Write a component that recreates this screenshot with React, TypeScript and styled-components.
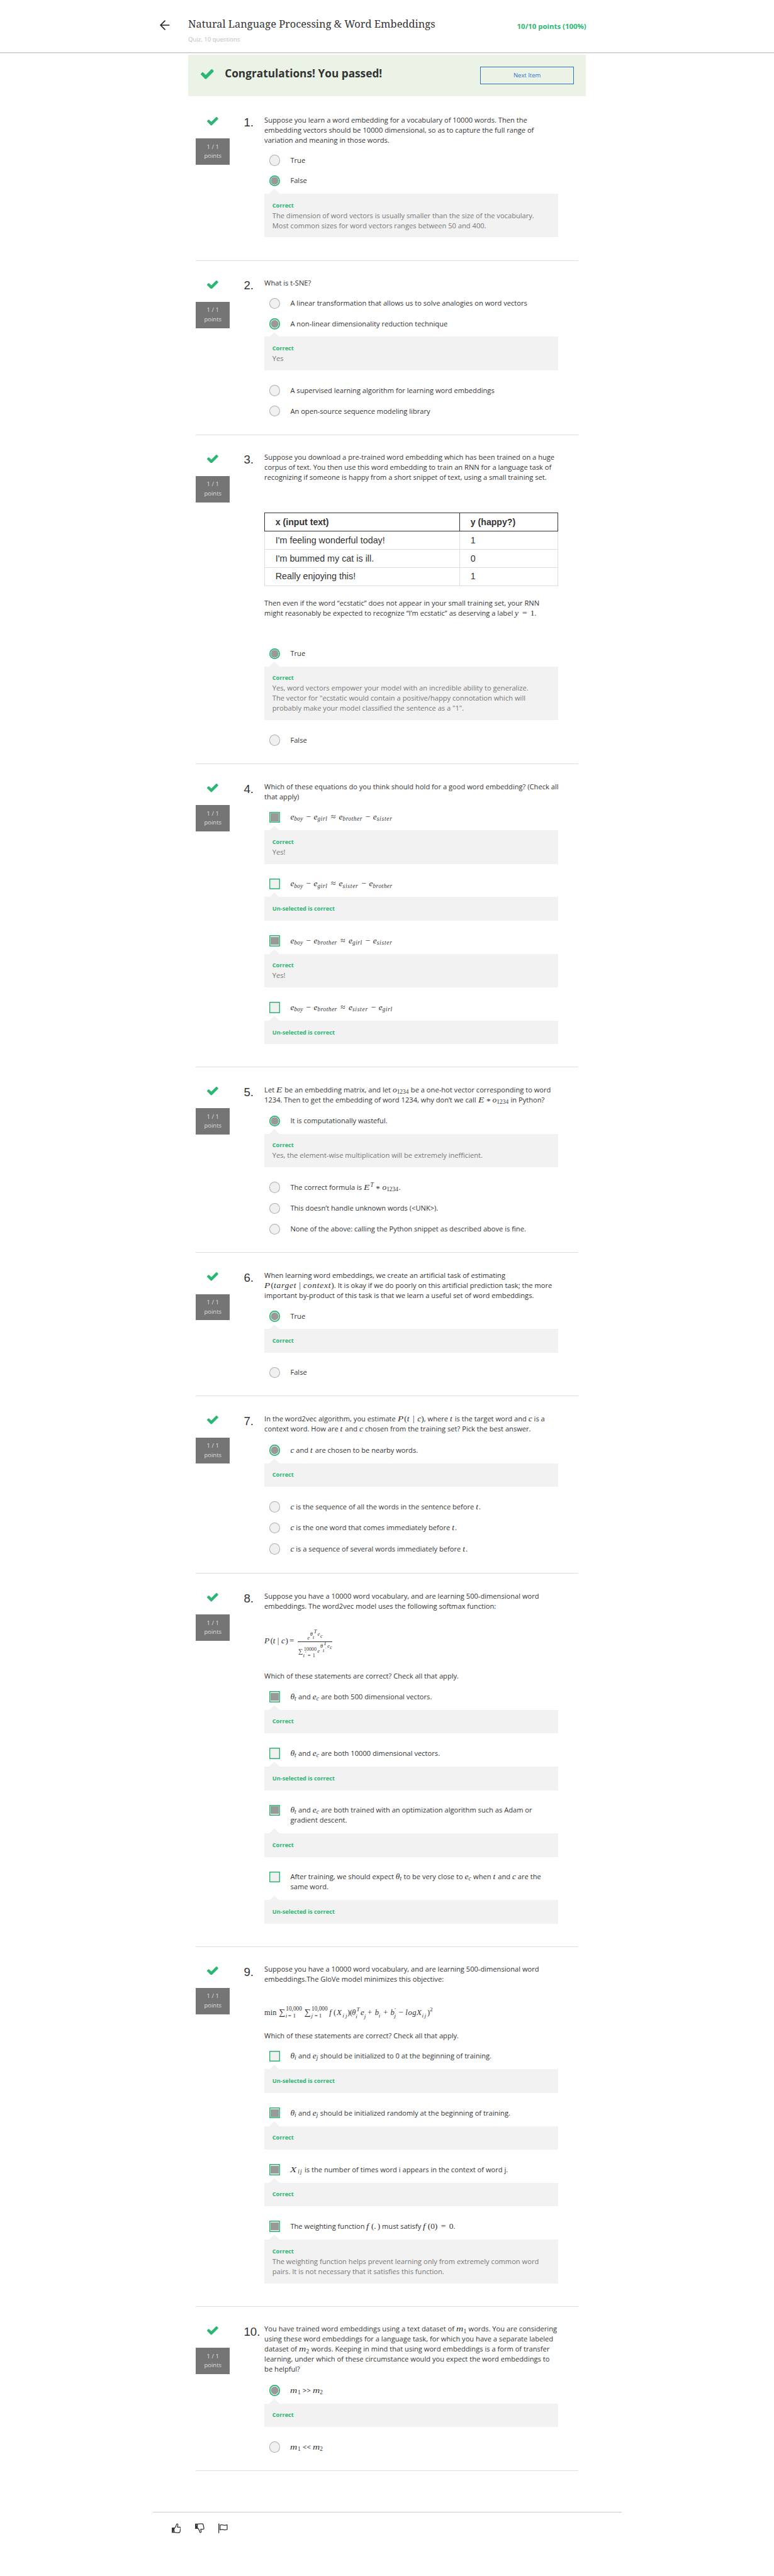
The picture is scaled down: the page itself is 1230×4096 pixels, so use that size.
import React from "react";
import styled, { createGlobalStyle, css } from "styled-components";

/* Design units: the page was laid out on an 1845px wide canvas. */
const u = (n: number) => `${Math.round((n * 2000) / 3) / 1000}px`;

const c = {
  green: "#2ab673",
  text: "#333",
  muted: "#777",
  panel: "#f2f2f2",
  line: "#ddd",
};

const sans = `"Open Sans", "Noto Sans", sans-serif`;
const arial = `"Liberation Sans", Arial, sans-serif`;
const times = `"Liberation Serif", "Times New Roman", serif`;

const GlobalStyle = createGlobalStyle`
  html, body { margin: 0; padding: 0; background: #fff; }
  *, *::before, *::after { box-sizing: border-box; }
`;

const Page = styled.div`
  width: 1230px;
  height: 4096px;
  overflow: hidden;
  background: #fff;
  color: ${c.text};
  font: 400 ${u(16.71)} / ${u(24)} ${sans};
`;

/* ---------- header ---------- */

const Header = styled.header`
  display: flex;
  height: ${u(126.5)};
  padding: ${u(40)} 0 0 ${u(381.5)};
  border-bottom: 1px solid #c9c9c9;
  box-shadow: 0 1px 1px rgba(0, 0, 0, 0.1);
`;

const BackArrow = styled.svg`
  width: ${u(24)};
  height: ${u(24)};
  margin-top: ${u(7.6)};
`;

const TitleBlock = styled.div`
  width: ${u(649)};
  margin-left: ${u(43)};
`;

const Title = styled.h1`
  margin: 0;
  font: 400 ${u(24.6)} / ${u(32)} "Noto Serif", "DejaVu Serif", serif;
  white-space: nowrap;
`;

const Subtitle = styled.div`
  margin-top: ${u(12)};
  font-size: ${u(14.4)};
  line-height: ${u(22)};
  color: #bdbdbd;
`;

const Score = styled.div`
  width: ${u(300)};
  padding-top: ${u(11)};
  font-size: ${u(17.1)};
  font-weight: 700;
  text-align: right;
  color: ${c.green};
`;

/* ---------- banner ---------- */

const Banner = styled.section`
  display: flex;
  align-items: flex-start;
  width: ${u(948.5)};
  height: ${u(99.5)};
  margin: ${u(4)} 0 0 ${u(448.5)};
  padding: ${u(28)} ${u(28.8)} 0 ${u(30.5)};
  background: #eaf3e6;
`;

const BannerCheck = styled.div`
  padding-top: ${u(6.5)};
`;

const BannerTitle = styled.h2`
  flex: 1;
  margin: ${u(0.4)} 0 0 ${u(25.8)};
  font: 700 ${u(25.9)} / ${u(34)} ${sans};
  white-space: nowrap;
`;

const NextButton = styled.button`
  width: ${u(223.5)};
  height: ${u(42.8)};
  padding: 0;
  border: 1px solid #2a73cc;
  background: transparent;
  color: #2a73cc;
  font: 400 ${u(14.2)} / ${u(20)} ${sans};
`;

const CheckSvg = styled.svg<{ $w: number }>`
  display: block;
  width: ${(p) => u(p.$w)};
  height: ${(p) => u(p.$w * 0.7665)};
  fill: ${c.green};
`;

/* ---------- question frame ---------- */

const Questions = styled.main`
  width: ${u(912.3)};
  margin-left: ${u(466.7)};
  padding-top: ${u(2.5)};
`;

const QuestionBox = styled.section<{ $h: number }>`
  display: flex;
  height: ${(p) => u(p.$h)};
  border-bottom: 1px solid ${c.line};
`;

const Status = styled.div`
  display: flex;
  flex-direction: column;
  align-items: center;
  width: ${u(81.4)};
  padding-top: ${u(46.6)};
`;

const Points = styled.div`
  width: 100%;
  height: ${u(62.6)};
  margin-top: ${u(31)};
  padding-top: ${u(9.5)};
  background: #757575;
  color: #dedede;
  font-size: ${u(14.25)};
  line-height: ${u(22)};
  text-align: center;
`;

const Num = styled.div`
  width: ${u(49)};
  margin-left: ${u(33.1)};
  padding-top: ${u(43.2)};
  font: 400 ${u(28)} / ${u(32)} ${arial};
  white-space: nowrap;
`;

const Body = styled.div`
  width: ${u(700.5)};
  padding-top: ${u(41.4)};
`;

const Prompt = styled.div`
  white-space: nowrap;
`;

const Options = styled.div<{ $gap?: number }>`
  margin-top: ${(p) => u(p.$gap ?? 11.6)};
`;

const OptionRow = styled.div<{ $tall?: boolean }>`
  display: flex;
  align-items: flex-start;
  padding: ${u(12.5)} 0 ${(p) => u(p.$tall ? 13.7 : 12.8)} ${u(11.6)};
  white-space: nowrap;
`;

const control = css`
  flex: none;
  width: ${u(26.4)};
  height: ${u(26.4)};
  margin: ${u(-1)} ${u(24)} ${u(-2)} 0;
`;

const Radio = styled.span<{ $on?: boolean }>`
  ${control}
  border-radius: 50%;
  background: #f0f0f0;
  box-shadow: inset 0 0 0 1px #b0b0b0;
  ${(p) =>
    p.$on &&
    css`
      background: radial-gradient(circle closest-side, #999 0 68%, #f0f0f0 74%);
      box-shadow: inset 0 0 0 1.7px ${c.green};
    `}
`;

const Checkbox = styled.span<{ $on?: boolean }>`
  ${control}
  padding: ${u(4)};
  border-radius: 1px;
  background: #f0f0f0;
  box-shadow: inset 0 0 0 1.4px ${c.green};
  &::before {
    content: "";
    display: ${(p) => (p.$on ? "block" : "none")};
    width: 100%;
    height: 100%;
    background: #999;
  }
`;

const Feedback = styled.div`
  position: relative;
  margin: ${u(5.8)} 0 ${u(23)};
  padding: ${u(16)} ${u(19)} ${u(16.4)};
  background: ${c.panel};
  color: ${c.muted};
  white-space: nowrap;
  &::before {
    content: "";
    position: absolute;
    left: ${u(12.3)};
    top: ${u(-11.5)};
    border: solid transparent;
    border-width: 0 8px 8px;
    border-bottom-color: ${c.panel};
  }
`;

const Verdict = styled.div`
  font-size: ${u(13.8)};
  font-weight: 700;
  color: ${c.green};
`;

/* ---------- table ---------- */

const Table = styled.table`
  width: 100%;
  margin: ${u(72)} 0 ${u(29.2)};
  border-collapse: collapse;
  font: 400 ${u(21.5)} / ${u(28)} ${arial};
  td,
  th {
    height: ${u(43.3)};
    padding: 0 ${u(25)};
    border: 1px solid #ddd;
    text-align: left;
  }
  th {
    border-color: #333;
    font-size: ${u(21.2)};
    font-weight: 700;
  }
  th:first-child {
    width: ${u(465)};
  }
`;

/* ---------- maths ---------- */

const M = styled.span`
  font-family: ${times};
  font-size: 1.21em;
  line-height: 0;
  white-space: nowrap;
`;

const I = styled.i<{ $ls?: number }>`
  letter-spacing: ${(p) => p.$ls ?? 0}em;
`;

/* A letter stretched to the proportions of the maths italic. */
const Wide = styled.i<{ $w: number; $x: number }>`
  display: inline-block;
  width: ${(p) => p.$w}em;
  transform: scaleX(${(p) => p.$x});
  transform-origin: left;
`;

const Sub = styled.sub<{ $ls?: number }>`
  font-size: 0.7em;
  font-style: italic;
  line-height: 0;
  vertical-align: -0.22em;
  letter-spacing: ${(p) => p.$ls ?? 0}em;
  margin-right: 0.05em;
`;

const Sup = styled.sup`
  font-size: 0.7em;
  font-style: italic;
  line-height: 0;
  vertical-align: 0.58em;
`;

const Up = styled.span`
  font-style: normal;
`;

const Op = styled.span<{ $w?: number; $m?: number; $y?: number }>`
  display: inline-block;
  width: ${(p) => p.$w ?? 0.778}em;
  margin: 0 ${(p) => p.$m ?? 0.222}em;
  text-align: center;
  transform: translateY(${(p) => p.$y ?? 0}em);
`;

/* One glyph run of a display formula: its advance, drop from the baseline and size. */
const Glyph = styled.span<{ $w: number; $y: number; $s: number; $up: boolean }>`
  display: inline-block;
  width: ${(p) => u(p.$w)};
  font-size: ${(p) => u(p.$s)};
  font-style: ${(p) => (p.$up ? "normal" : "italic")};
  line-height: 0;
  transform: translateY(${(p) => u(p.$y)});
`;

const Softmax = styled.div`
  display: flex;
  align-items: center;
  height: ${u(143.4)};
  padding-top: ${u(2.6)};
  font: italic 400 ${u(19.5)} / ${u(24)} ${times};
  white-space: nowrap;
`;

const Fraction = styled.span`
  display: flex;
  flex-direction: column;
  font-size: ${u(12.5)};
`;

const Numerator = styled.span`
  height: ${u(40)};
  padding: ${u(10)} 0 0 ${u(23.5)};
`;

const Denominator = styled.span`
  width: ${u(83.5)};
  height: ${u(40)};
  padding: ${u(12)} 0 0 ${u(1.5)};
  border-top: 1px solid ${c.text};
`;

const Objective = styled.div`
  height: ${u(110.7)};
  padding-top: ${u(54.7)};
  font: italic 400 ${u(18.7)} / ${u(24)} ${times};
  white-space: nowrap;
`;

/* ---------- footer ---------- */

const Footer = styled.footer`
  display: flex;
  gap: ${u(34)};
  width: ${u(1116.5)};
  margin: ${u(97)} 0 0 ${u(365)};
  padding: ${u(26)} 0 0 ${u(44)};
  border-top: 1px solid #ccc;
`;

const FooterIcon = styled.svg`
  width: ${u(22)};
  height: ${u(24)};
  fill: none;
  stroke: ${c.text};
  stroke-width: 1.9;
  stroke-linejoin: round;
  stroke-linecap: round;
`;

/* ---------- parts ---------- */

const Check = ({ w = 26.7 }: { w?: number }) => (
  <CheckSvg $w={w} viewBox="121 334 1550 1188">
    <path d="M1671 566q0 40-28 68l-724 724-136 136q-28 28-68 28t-68-28l-136-136-362-362q-28-28-28-68t28-68l136-136q28-28 68-28t68 28l294 295 656-657q28-28 68-28t68 28l136 136q28 28 28 68z" />
  </CheckSvg>
);

const Question = ({ n, h, children }: { n: number; h: number; children: React.ReactNode }) => (
  <QuestionBox $h={h}>
    <Status>
      <Check />
      <Points>
        1 / 1<br />
        points
      </Points>
    </Status>
    <Num>{n}.</Num>
    <Body>{children}</Body>
  </QuestionBox>
);

type OptProps = {
  box?: boolean;
  on?: boolean;
  tall?: boolean;
  verdict?: string;
  note?: React.ReactNode;
  children: React.ReactNode;
};

const Option = ({ box, on, tall, verdict, note, children }: OptProps) => (
  <>
    <OptionRow $tall={tall}>
      {box ? <Checkbox $on={on} /> : <Radio $on={on} />}
      <div>{children}</div>
    </OptionRow>
    {verdict && (
      <Feedback>
        <Verdict>{verdict}</Verdict>
        {note}
      </Feedback>
    )}
  </>
);

const OK = "Correct";
const UN = "Un-selected is correct";

type Who = "boy" | "girl" | "brother" | "sister";
const tracking: Record<Who, number> = { boy: 0.02, girl: 0.06, brother: 0.05, sister: 0.08 };

const Emb = ({ s }: { s: Who }) => (
  <>
    <I>e</I>
    <Sub $ls={tracking[s]}>{s}</Sub>
  </>
);

const Analogy = ({ w }: { w: [Who, Who, Who, Who] }) => (
  <M>
    <Emb s={w[0]} />
    <Op>−</Op>
    <Emb s={w[1]} />
    <Op $m={0.27}>≈</Op>
    <Emb s={w[2]} />
    <Op>−</Op>
    <Emb s={w[3]} />
  </M>
);

const O1234 = () => (
  <>
    <I>o</I>
    <Sub>
      <Up>1234</Up>
    </Sub>
  </>
);
const BigE = () => (
  <Wide $w={0.77} $x={1.15}>
    E
  </Wide>
);
const BigP = () => (
  <Wide $w={0.78} $x={1.12}>
    P
  </Wide>
);
const SmallF = () => (
  <Wide $w={0.56} $x={1.1}>
    f
  </Wide>
);
const Star = ({ m }: { m?: number }) => (
  <Op $w={0.5} $m={m} $y={0.17}>
    *
  </Op>
);
const V = ({ b, s }: { b: string; s: string }) => (
  <M>
    <I>{b}</I>
    <Sub>{s}</Sub>
  </M>
);
const Sym = ({ s }: { s: string }) => (
  <M>
    <I $ls={s === "t" ? 0.08 : 0}>{s}</I>
  </M>
);
const Mn = ({ n }: { n: number }) => (
  <M>
    <Wide $w={0.862} $x={1.16}>
      m
    </Wide>
    <Sub>
      <Up>{n}</Up>
    </Sub>
  </M>
);

type G = [text: string, advance: number, drop: number, size: number, upright?: 1];

const Glyphs = ({ run }: { run: G[] }) => (
  <>
    {run.map(([t, w, y, s, up], i) => (
      <Glyph key={i} $w={w} $y={y} $s={s} $up={!!up}>
        {t}
      </Glyph>
    ))}
  </>
);

const lhs: G[] = [
  ["P", 14.5, -2.1, 20],
  ["(", 6, -2.1, 19.5, 1],
  ["t", 10.5, -2.1, 19.5],
  ["|", 9.5, -2.1, 19.5, 1],
  ["c", 9.5, -2.1, 19.5],
  [")", 10, -2.1, 19.5, 1],
  ["=", 19, -2.1, 19.5, 1],
];
const numerator: G[] = [
  ["e", 6.7, 9.8, 12.5],
  ["θ", 6.3, 2.1, 12.5],
  ["t", 2.5, 9.1, 12.5],
  ["T", 9, -4.2, 12.8],
  ["e", 6.3, 1.1, 12.5],
  ["c", 6, 5.5, 12.5],
];
const denominator: G[] = [
  ["∑", 12, 0, 15.5, 1],
  ["t", 1.4, 9.1, 12.5],
  ["10000", 3.3, -5.9, 12.2, 1],
  ["′", 6, 5, 11],
  ["=", 12, 9, 13, 1],
  ["1", 11.3, 9.1, 12.5, 1],
  ["e", 7, -1.9, 12.5],
  ["θ", 6, -13.5, 12.5],
  ["t", 1.7, -3.2, 12.5],
  ["T", 4, -18.9, 12.8],
  ["′", 5.3, -8, 10],
  ["e", 6, -13.5, 12.5],
  ["c", 6, -10.5, 12.5],
];
const objective: G[] = [
  ["min", 34.7, 0, 18.7, 1],
  ["∑", 15.9, 0, 21, 1],
  ["i", 0.6, 6, 13.8],
  ["10,000", 5.3, -10.3, 14, 1],
  ["=", 11.5, 6, 13.8, 1],
  ["1", 27.7, 6, 13.8, 1],
  ["∑", 16, 0, 21, 1],
  ["j", 0.8, 6, 13.8],
  ["10,000", 7, -10.3, 14, 1],
  ["=", 10.5, 6, 13.8, 1],
  ["1", 25, 6, 13.8, 1],
  ["f", 10, 0, 19.5],
  ["(", 7.5, 0, 18.7, 1],
  ["X", 14, 0, 19.5],
  ["i", 7, 6, 13.8],
  ["j", 4.5, 6, 13.8],
  [")", 6, 0, 18.7, 1],
  ["(", 5, 0, 18.7, 1],
  ["θ", 9, 0, 18.7],
  ["i", 1.6, 7, 13.8],
  ["T", 9.9, -9, 13.8],
  ["e", 8.5, 0, 19.5],
  ["j", 8, 7, 13.8],
  ["+", 17.5, 0, 19.5, 1],
  ["b", 9, 0, 19],
  ["i", 11, 6, 13.8],
  ["+", 17.5, 0, 19.5, 1],
  ["b", 9, 0, 19],
  ["′", 0, -7, 13.8],
  ["j", 10, 6, 13.8],
  ["−", 16.5, 0, 19.5, 1],
  ["l", 6.5, 0, 19],
  ["o", 10, 0, 19],
  ["g", 10, 0, 19],
  ["X", 13, 0, 19.5],
  ["i", 6, 6, 13.8],
  ["j", 6.6, 6, 13.8],
  [")", 6.1, 0, 18.7, 1],
  ["2", 8, -9.5, 13.8, 1],
];

export default function App() {
  return (
    <Page>
      <GlobalStyle />
      <Header>
        <BackArrow viewBox="0 0 24 24" fill="none" stroke="#222" strokeWidth="2.5" strokeLinecap="round">
          <path d="M22.2 12H1.6M12 1.6 1.6 12 12 22.4" />
        </BackArrow>
        <TitleBlock>
          <Title>Natural Language Processing &amp; Word Embeddings</Title>
          <Subtitle>Quiz, 10 questions</Subtitle>
        </TitleBlock>
        <Score>10/10 points (100%)</Score>
      </Header>

      <Banner>
        <BannerCheck>
          <Check w={31} />
        </BannerCheck>
        <BannerTitle>Congratulations! You passed!</BannerTitle>
        <NextButton>Next Item</NextButton>
      </Banner>

      <Questions>
        <Question n={1} h={389.4}>
          <Prompt>
            Suppose you learn a word embedding for a vocabulary of 10000 words. Then the
            <br />
            embedding vectors should be 10000 dimensional, so as to capture the full range of
            <br />
            variation and meaning in those words.
          </Prompt>
          <Options>
            <Option>True</Option>
            <Option
              on
              verdict={OK}
              note={
                <>
                  The dimension of word vectors is usually smaller than the size of the vocabulary.
                  <br />
                  Most common sizes for word vectors ranges between 50 and 400.
                </>
              }
            >
              False
            </Option>
          </Options>
        </Question>

        <Question n={2} h={415.6}>
          <Prompt>What is t-SNE?</Prompt>
          <Options>
            <Option>A linear transformation that allows us to solve analogies on word vectors</Option>
            <Option on verdict={OK} note="Yes">
              A non-linear dimensionality reduction technique
            </Option>
            <Option>A supervised learning algorithm for learning word embeddings</Option>
            <Option>An open-source sequence modeling library</Option>
          </Options>
        </Question>

        <Question n={3} h={785.2}>
          <Prompt>
            Suppose you download a pre-trained word embedding which has been trained on a huge
            <br />
            corpus of text. You then use this word embedding to train an RNN for a language task of
            <br />
            recognizing if someone is happy from a short snippet of text, using a small training set.
          </Prompt>
          <Table>
            <thead>
              <tr>
                <th>x (input text)</th>
                <th>y (happy?)</th>
              </tr>
            </thead>
            <tbody>
              <tr>
                <td>I'm feeling wonderful today!</td>
                <td>1</td>
              </tr>
              <tr>
                <td>I'm bummed my cat is ill.</td>
                <td>0</td>
              </tr>
              <tr>
                <td>Really enjoying this!</td>
                <td>1</td>
              </tr>
            </tbody>
          </Table>
          <Prompt>
            Then even if the word “ecstatic” does not appear in your small training set, your RNN
            <br />
            might reasonably be expected to recognize “I’m ecstatic” as deserving a label{" "}
            <M>
              <I $ls={0.05}>y</I>
              <Op $m={0.278}>=</Op>1
            </M>
            .
          </Prompt>
          <Options $gap={59.8}>
            <Option
              on
              verdict={OK}
              note={
                <>
                  Yes, word vectors empower your model with an incredible ability to generalize.
                  <br />
                  The vector for "ecstatic would contain a positive/happy connotation which will
                  <br />
                  probably make your model classified the sentence as a "1".
                </>
              }
            >
              True
            </Option>
            <Option>False</Option>
          </Options>
        </Question>

        <Question n={4} h={723}>
          <Prompt>
            Which of these equations do you think should hold for a good word embedding? (Check all
            <br />
            that apply)
          </Prompt>
          <Options $gap={12.4}>
            <Option box on tall verdict={OK} note="Yes!">
              <Analogy w={["boy", "girl", "brother", "sister"]} />
            </Option>
            <Option box tall verdict={UN}>
              <Analogy w={["boy", "girl", "sister", "brother"]} />
            </Option>
            <Option box on tall verdict={OK} note="Yes!">
              <Analogy w={["boy", "brother", "girl", "sister"]} />
            </Option>
            <Option box tall verdict={UN}>
              <Analogy w={["boy", "brother", "sister", "girl"]} />
            </Option>
          </Options>
        </Question>

        <Question n={5} h={443}>
          <Prompt>
            Let{" "}
            <M>
              <BigE />
            </M>{" "}
            be an embedding matrix, and let{" "}
            <M>
              <O1234 />
            </M>{" "}
            be a one-hot vector corresponding to word
            <br />
            1234. Then to get the embedding of word 1234, why don’t we call{" "}
            <M>
              <BigE />
              <Star />
              <O1234 />
            </M>{" "}
            in Python?
          </Prompt>
          <Options $gap={14}>
            <Option on verdict={OK} note="Yes, the element-wise multiplication will be extremely inefficient.">
              It is computationally wasteful.
            </Option>
            <Option tall>
              The correct formula is{" "}
              <M>
                <BigE />
                <Sup>T</Sup>
                <Star m={0.26} />
                <O1234 />
              </M>
              .
            </Option>
            <Option>This doesn’t handle unknown words (&lt;UNK&gt;).</Option>
            <Option>None of the above: calling the Python snippet as described above is fine.</Option>
          </Options>
        </Question>

        <Question n={6} h={342}>
          <Prompt>
            When learning word embeddings, we create an artificial task of estimating
            <br />
            <M>
              <BigP />(<I $ls={0.055}>target</I>
              <Op $w={0.278} $m={0.26}>|</Op>
              <I $ls={0.058}>context</I>)
            </M>
            . It is okay if we do poorly on this artificial prediction task; the more
            <br />
            important by-product of this task is that we learn a useful set of word embeddings.
          </Prompt>
          <Options $gap={12.8}>
            <Option on verdict={OK}>
              True
            </Option>
            <Option>False</Option>
          </Options>
        </Question>

        <Question n={7} h={422.3}>
          <Prompt>
            In the word2vec algorithm, you estimate{" "}
            <M>
              <BigP />
              (<I $ls={0.08}>t</I>
              <Op $w={0.278} $m={0.3}>|</Op>
              <I>c</I>)
            </M>
            , where <Sym s="t" /> is the target word and <Sym s="c" /> is a
            <br />
            context word. How are <Sym s="t" /> and <Sym s="c" /> chosen from the training set? Pick the best answer.
          </Prompt>
          <Options $gap={13.9}>
            <Option on tall verdict={OK}>
              <Sym s="c" /> and <Sym s="t" /> are chosen to be nearby words.
            </Option>
            <Option tall>
              <Sym s="c" /> is the sequence of all the words in the sentence before <Sym s="t" />.
            </Option>
            <Option tall>
              <Sym s="c" /> is the one word that comes immediately before <Sym s="t" />.
            </Option>
            <Option tall>
              <Sym s="c" /> is a sequence of several words immediately before <Sym s="t" />.
            </Option>
          </Options>
        </Question>

        <Question n={8} h={890.7}>
          <Prompt>
            Suppose you have a 10000 word vocabulary, and are learning 500-dimensional word
            <br />
            embeddings. The word2vec model uses the following softmax function:
          </Prompt>
          <Softmax>
            <span>
              <Glyphs run={lhs} />
            </span>
            <Fraction>
              <Numerator>
                <Glyphs run={numerator} />
              </Numerator>
              <Denominator>
                <Glyphs run={denominator} />
              </Denominator>
            </Fraction>
          </Softmax>
          <Prompt>Which of these statements are correct? Check all that apply.</Prompt>
          <Options $gap={12.4}>
            <Option box on tall verdict={OK}>
              <V b="θ" s="t" /> and <V b="e" s="c" /> are both 500 dimensional vectors.
            </Option>
            <Option box tall verdict={UN}>
              <V b="θ" s="t" /> and <V b="e" s="c" /> are both 10000 dimensional vectors.
            </Option>
            <Option box on tall verdict={OK}>
              <V b="θ" s="t" /> and <V b="e" s="c" /> are both trained with an optimization algorithm such as Adam or
              <br />
              gradient descent.
            </Option>
            <Option box tall verdict={UN}>
              After training, we should expect <V b="θ" s="t" /> to be very close to <V b="e" s="c" /> when{" "}
              <Sym s="t" /> and <Sym s="c" /> are the
              <br />
              same word.
            </Option>
          </Options>
        </Question>

        <Question n={9} h={858.2}>
          <Prompt>
            Suppose you have a 10000 word vocabulary, and are learning 500-dimensional word
            <br />
            embeddings.The GloVe model minimizes this objective:
          </Prompt>
          <Objective>
            <Glyphs run={objective} />
          </Objective>
          <Prompt>Which of these statements are correct? Check all that apply.</Prompt>
          <Options $gap={11.8}>
            <Option box tall verdict={UN}>
              <V b="θ" s="i" /> and <V b="e" s="j" /> should be initialized to 0 at the beginning of training.
            </Option>
            <Option box on tall verdict={OK}>
              <V b="θ" s="i" /> and <V b="e" s="j" /> should be initialized randomly at the beginning of training.
            </Option>
            <Option box on tall verdict={OK}>
              <M>
                <Wide $w={0.87} $x={1.25}>
                  X
                </Wide>
                <Sub $ls={0.12}>ij</Sub>
              </M>{" "}
              is the number of times word i appears in the context of word j.
            </Option>
            <Option
              box
              on
              tall
              verdict={OK}
              note={
                <>
                  The weighting function helps prevent learning only from extremely common word
                  <br />
                  pairs. It is not necessary that it satisfies this function.
                </>
              }
            >
              The weighting function{" "}
              <M>
                <SmallF />(<I $ls={0.13}>.</I>)
              </M>{" "}
              must satisfy{" "}
              <M>
                <SmallF />
                (0)<Op $m={0.29}>=</Op>0
              </M>
              .
            </Option>
          </Options>
        </Question>

        <Question n={10} h={392.2}>
          <Prompt>
            You have trained word embeddings using a text dataset of <Mn n={1} /> words. You are considering
            <br />
            using these word embeddings for a language task, for which you have a separate labeled
            <br />
            dataset of <Mn n={2} /> words. Keeping in mind that using word embeddings is a form of transfer
            <br />
            learning, under which of these circumstance would you expect the word embeddings to
            <br />
            be helpful?
          </Prompt>
          <Options $gap={13.2}>
            <Option on tall verdict={OK}>
              <Mn n={1} /> &gt;&gt; <Mn n={2} />
            </Option>
            <Option tall>
              <Mn n={1} /> &lt;&lt; <Mn n={2} />
            </Option>
          </Options>
        </Question>
      </Questions>

      <Footer>
        <FooterIcon viewBox="0 0 22 24">
          <path d="M1 11.500h4.500v10.500H1z" fill="#333" />
          <path d="M5.500 12.500C8 11 10 8 11.500 2.500 12.500 1 15 1.500 14.500 4.500L13.500 9.500H19C21 9.500 21.200 11 21 12.500L19.500 20.500C19.200 22 18.500 22.500 17 22.500 12 23 9 22.500 5.500 21.500" />
          <circle cx="3.400" cy="19.300" r="0.900" fill="#fff" stroke="none" />
        </FooterIcon>
        <FooterIcon viewBox="0 0 22 24">
          <path d="M1 12.500h4.500V2H1z" fill="#333" />
          <path d="M5.500 11.500C8 13 10 16 11.500 21.500 12.500 23 15 22.500 14.500 19.500L13.500 14.500H19C21 14.500 21.200 13 21 11.500L19.500 3.500C19.200 2 18.500 1.500 17 1.500 12 1 9 1.500 5.500 2.500" />
          <circle cx="3.400" cy="4.500" r="0.900" fill="#fff" stroke="none" />
        </FooterIcon>
        <FooterIcon viewBox="0 0 22 24">
          <path d="M1 3v20M4 5C8 2 12 7 21 4v11C14 18 11 13 4 16z" />
          <circle cx="1.200" cy="2.200" r="1.300" fill="#333" stroke="none" />
        </FooterIcon>
      </Footer>
    </Page>
  );
}
